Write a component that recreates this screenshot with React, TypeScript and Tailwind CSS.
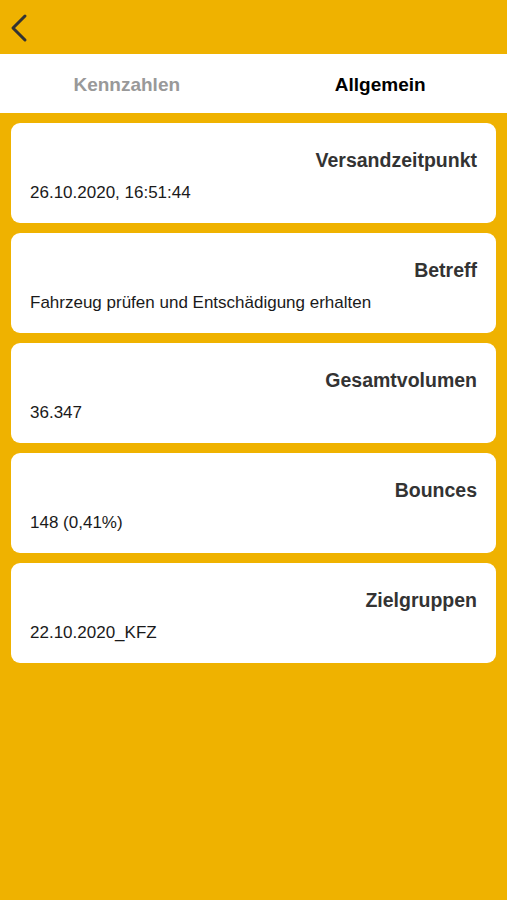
import React from "react";

const items = [
  { title: "Versandzeitpunkt", value: "26.10.2020, 16:51:44" },
  { title: "Betreff", value: "Fahrzeug prüfen und Entschädigung erhalten" },
  { title: "Gesamtvolumen", value: "36.347" },
  { title: "Bounces", value: "148 (0,41%)" },
  { title: "Zielgruppen", value: "22.10.2020_KFZ" },
];

export default function App() {
  return (
    <div
      className="w-[507px] h-[900px] bg-[#efb200] flex flex-col"
      style={{ fontFamily: '"Liberation Sans", Arial, sans-serif' }}
    >
      <div className="h-[54px] flex items-center pl-[8px] pt-[2px]">
        <svg width="22" height="30" viewBox="0 0 22 30" fill="none">
          <path d="M17 3 L5 15 L17 27" stroke="#333" strokeWidth="3" strokeLinecap="round" strokeLinejoin="round" />
        </svg>
      </div>
      <div className="h-[59px] bg-white grid grid-cols-2 items-center pt-[4px]">
        <div className="text-center text-[19px] font-bold text-[#999999]">Kennzahlen</div>
        <div className="text-center text-[19px] font-bold text-black">Allgemein</div>
      </div>
      <div className="flex flex-col gap-[10px] px-[11px] pt-[10px]">
        {items.map((it) => (
          <div key={it.title} className="h-[100px] bg-white rounded-[9px] px-[19px] pt-[26px]">
            <div className="text-right text-[19.5px] font-bold text-[#333333] leading-[22px]">{it.title}</div>
            <div className="text-[17px] text-[#1a1a1a] leading-[20px] mt-[12px]">{it.value}</div>
          </div>
        ))}
      </div>
    </div>
  );
}
